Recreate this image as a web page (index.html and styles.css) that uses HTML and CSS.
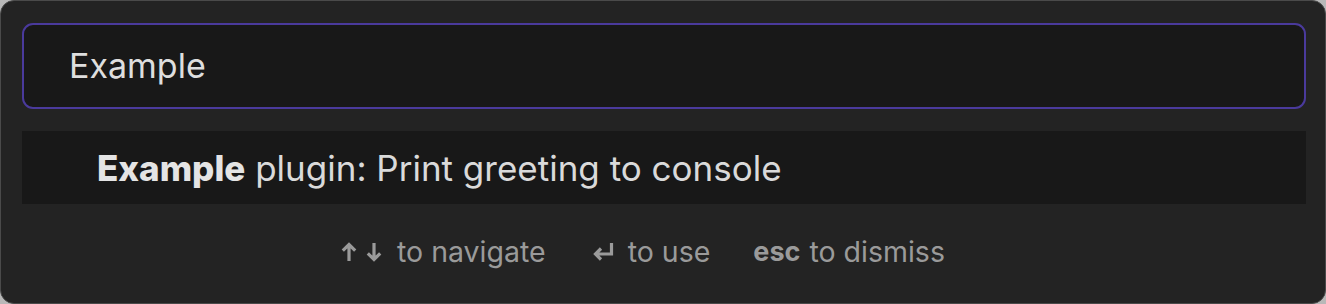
FILE: index.html
```html
<!DOCTYPE html>
<html>
<head>
<meta charset="utf-8">
<link rel="stylesheet" href="styles.css">
</head>
<body>
<div class="panel">
  <div class="search">Example</div>
  <div class="results">
    <div class="result"><span class="match">Example</span> plugin: Print greeting to console</div>
  </div>
  <div class="footer">
    <div class="hint">
      <span class="keys">
        <svg width="16" height="20" viewBox="0 0 16 20"><path d="M8 2.5 L8 19 M1.8 8.7 L8 2.5 L14.2 8.7" fill="none" stroke="currentColor" stroke-width="3.2" stroke-linejoin="miter"/></svg>
        <svg width="18" height="20" viewBox="0 0 18 20"><path d="M9 1 L9 17.5 M2.8 11.3 L9 17.5 L15.2 11.3" fill="none" stroke="currentColor" stroke-width="3.2" stroke-linejoin="miter"/></svg>
      </span>
      <span>to navigate</span>
    </div>
    <div class="hint">
      <span class="keys">
        <svg width="22" height="20" viewBox="0 0 22 20"><path d="M19.5 1 L19.5 12 L4 12 M9 6.5 L3.5 12 L9 17.5" fill="none" stroke="currentColor" stroke-width="3.2" stroke-linejoin="miter"/></svg>
      </span>
      <span>to use</span>
    </div>
    <div class="hint tight">
      <span class="kbd">esc</span>
      <span>to dismiss</span>
    </div>
  </div>
</div>
</body>
</html>
```
FILE: styles.css
```css
html, body {
  margin: 0;
  padding: 0;
  background: #b8b8b8;
}
body {
  width: 1326px;
  height: 304px;
  font-family: Inter, "Noto Sans", sans-serif;
}
.panel {
  box-sizing: border-box;
  width: 1326px;
  height: 304px;
  background: #232323;
  border: 1px solid #4a4a4a;
  border-radius: 14px;
  padding: 22px 19px 0 21px;
  display: flex;
  flex-direction: column;
}
.search {
  box-sizing: border-box;
  height: 86px;
  border: 2px solid #4a3a9c;
  border-radius: 11px;
  background: #181818;
  color: #dedede;
  font-size: 34px;
  padding-left: 45px;
  padding-bottom: 2px;
  display: flex;
  align-items: center;
}
.results {
  margin-top: 22px;
}
.result {
  height: 73px;
  background: #181818;
  color: #dadada;
  font-size: 35px;
  padding-left: 75px;
  display: flex;
  align-items: center;
  white-space: pre;
}
.match {
  font-weight: 800;
  color: #e4e4e4;
}
.footer {
  display: flex;
  justify-content: center;
  gap: 46px;
  margin-top: 30px;
  padding-right: 42px;
  color: #9a9a9a;
  font-size: 28.5px;
}
.hint {
  display: flex;
  align-items: center;
  gap: 14px;
}
.hint.tight {
  gap: 9px;
  margin-left: -3px;
}
.keys {
  display: flex;
  align-items: center;
  gap: 8px;
}
.kbd {
  font-weight: 700;
  font-size: 27px;
}
```
